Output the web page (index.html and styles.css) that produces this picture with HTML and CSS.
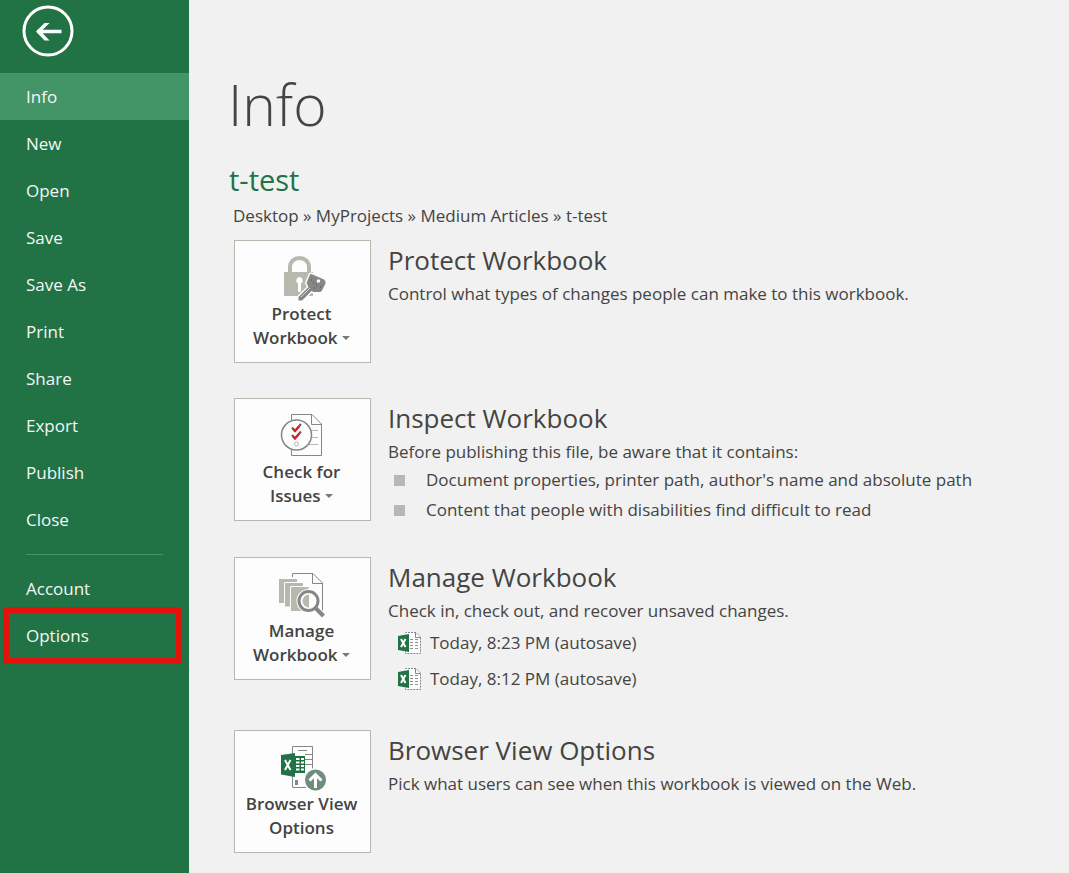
FILE: index.html
```html
<!DOCTYPE html>
<html lang="en">
<head>
<meta charset="utf-8">
<meta name="viewport" content="width=device-width, initial-scale=1">
<title>Info</title>
<link rel="stylesheet" href="styles.css">
</head>
<body>
<div class="backstage">
  <aside class="sidebar">
    <button class="back" type="button" aria-label="Back">
      <svg width="52" height="52" viewBox="0 0 52 52" fill="none" stroke="#fff">
        <circle cx="26" cy="26" r="24" stroke-width="3"/>
        <path d="M15 26.500H39.500" stroke-width="3.500"/>
        <path d="M14 26.500L22.500 18H27.500L19 26.500L27.500 35.500H22.500Z" fill="#fff" stroke="none"/>
      </svg>
    </button>
    <nav class="menu">
      <a class="item current" href="#" aria-current="page">Info</a>
      <a class="item" href="#">New</a>
      <a class="item" href="#">Open</a>
      <a class="item" href="#">Save</a>
      <a class="item" href="#">Save As</a>
      <a class="item" href="#">Print</a>
      <a class="item" href="#">Share</a>
      <a class="item" href="#">Export</a>
      <a class="item" href="#">Publish</a>
      <a class="item" href="#">Close</a>
      <hr class="divider">
      <a class="item" href="#">Account</a>
      <a class="item marked" href="#">Options</a>
    </nav>
  </aside>

  <main class="content">
    <h1 class="title">Info</h1>
    <h2 class="file-name">t-test</h2>
    <p class="path">Desktop » MyProjects » Medium Articles » t-test</p>

    <section class="task">
      <button class="tile" type="button">
        <svg class="tile-icon" width="48" height="48" viewBox="0 0 48 48">
          <path d="M12 21V14.500A9.500 8.500 0 0 1 31 14.500V21" fill="none" stroke="#b7b9ae" stroke-width="4"/>
          <path d="M6 20H35V44H6Z" fill="#b7b9ae"/>
          <path d="M21.500 25a3.500 3.500 0 0 1 1.500 6.500V40h-3v-8.500a3.500 3.500 0 0 1 1.500-6.500Z" fill="#fff"/>
          <path d="M32 22.500Q33 21.500 34.500 22.500L46 27.500Q48 29 47.500 31.500L44 38.500Q43 40.500 40.500 40H35.500L33.500 39L24 48.500H20.500V45L30.500 35L28.500 31Z" fill="#858786" stroke="#fdfdfd" stroke-width="3" stroke-linejoin="round"/>
          <path d="M32 22.500Q33 21.500 34.500 22.500L46 27.500Q48 29 47.500 31.500L44 38.500Q43 40.500 40.500 40H35.500L33.500 39L24 48.500H20.500V45L30.500 35L28.500 31Z" fill="#858786"/>
          <circle cx="40.500" cy="29" r="1.800" fill="#fff"/>
          <path d="M23 45L32 36" stroke="#d8d9d6"/>
          <path d="M33 28h1M38 33h1M35 31h1M42 35h1M36 36h1" stroke="#4c4e4d"/>
        </svg>
        <span>Protect</span>
        <span>Workbook <i class="caret"></i></span>
      </button>
      <div class="details">
        <h3 class="heading">Protect Workbook</h3>
        <p class="text">Control what types of changes people can make to this workbook.</p>
      </div>
    </section>

    <section class="task">
      <button class="tile" type="button">
        <svg class="tile-icon" width="48" height="48" viewBox="0 0 48 48" fill="none">
          <path d="M13.500 4.500H34L43.500 14V45.500H13.500Z" fill="#fdfdfd" stroke="#858786"/>
          <path d="M33.500 4.500V14.500H43.500" stroke="#858786"/>
          <path d="M31 20.500H40M33 27.500H40M31 34.500H40" stroke="#b7b9ae"/>
          <circle cx="18.500" cy="25" r="15" fill="#fdfdfd" stroke="#858786" stroke-width="1.500"/>
          <path d="M14 17.500L17 21L23 14M14 25L17 28.500L23 21.500" stroke="#6e5553" stroke-width="2"/>
          <path d="M15 19L17 21L21 16.500M15 26.500L17 28.500L21 24" stroke="#ee1717" stroke-width="2"/>
          <circle cx="18.500" cy="34" r="2" stroke="#b7b9ae"/>
        </svg>
        <span>Check for</span>
        <span>Issues <i class="caret"></i></span>
      </button>
      <div class="details">
        <h3 class="heading">Inspect Workbook</h3>
        <p class="text">Before publishing this file, be aware that it contains:</p>
        <ul class="findings">
          <li>Document properties, printer path, author's name and absolute path</li>
          <li>Content that people with disabilities find difficult to read</li>
        </ul>
      </div>
    </section>

    <section class="task">
      <button class="tile" type="button">
        <svg class="tile-icon" width="48" height="48" viewBox="0 0 48 48" fill="none">
          <path d="M14.500 8V4.500H35L44.500 14V45" stroke="#858786"/>
          <path d="M34.500 4.500V14.500H44.500" stroke="#858786"/>
          <path d="M1 10H19V34H1Z" fill="#b7b9ae"/>
          <path d="M6.500 13.500H25.500V38H6.500Z" fill="#b7b9ae" stroke="#fdfdfd"/>
          <path d="M12.500 17.500H31V42.500H12.500Z" fill="#b7b9ae" stroke="#fdfdfd"/>
          <circle cx="30.500" cy="32" r="12" fill="#fdfdfd"/>
          <path d="M31 25.500V38.500A6.500 6.500 0 0 1 31 25.500Z" fill="#b7b9ae"/>
          <path d="M36 37L46 47" stroke="#fdfdfd" stroke-width="6"/>
          <circle cx="30.500" cy="32" r="9.500" stroke="#858786" stroke-width="3"/>
          <path d="M37 38.500L45.500 47" stroke="#858786" stroke-width="4"/>
        </svg>
        <span>Manage</span>
        <span>Workbook <i class="caret"></i></span>
      </button>
      <div class="details">
        <h3 class="heading">Manage Workbook</h3>
        <p class="text">Check in, check out, and recover unsaved changes.</p>
        <ul class="versions">
          <li><a class="version" href="#">
            <svg width="24" height="24" viewBox="0 0 24 24" fill="none">
              <path d="M7.500 2V1.500H18L22.500 6V22.500H7.500V20" fill="#fdfdfd" stroke="#858786" stroke-dasharray="2 1"/>
              <path d="M17.500 1.500V6.500H22.500" stroke="#858786"/>
              <path d="M12 8.500H15M17 8.500H20M12 11.500H15M17 11.500H20M12 14.500H15M17 14.500H20M12 17.500H15M17 17.500H20" stroke="#8f918e"/>
              <path d="M0 5L11 3V21L0 19Z" fill="#217346"/>
              <path d="M3 8L7.500 16M7.500 8L3 16" stroke="#fff" stroke-width="2"/>
            </svg>Today, 8:23 PM (autosave)</a></li>
          <li><a class="version" href="#">
            <svg width="24" height="24" viewBox="0 0 24 24" fill="none">
              <path d="M7.500 2V1.500H18L22.500 6V22.500H7.500V20" fill="#fdfdfd" stroke="#858786" stroke-dasharray="2 1"/>
              <path d="M17.500 1.500V6.500H22.500" stroke="#858786"/>
              <path d="M12 8.500H15M17 8.500H20M12 11.500H15M17 11.500H20M12 14.500H15M17 14.500H20M12 17.500H15M17 17.500H20" stroke="#8f918e"/>
              <path d="M0 5L11 3V21L0 19Z" fill="#217346"/>
              <path d="M3 8L7.500 16M7.500 8L3 16" stroke="#fff" stroke-width="2"/>
            </svg>Today, 8:12 PM (autosave)</a></li>
        </ul>
      </div>
    </section>

    <section class="task">
      <button class="tile" type="button">
        <svg class="tile-icon" width="48" height="48" viewBox="0 0 48 48" fill="none">
          <path d="M14.500 4.500H34.500V45.500H14.500Z" fill="#fdfdfd" stroke="#858786"/>
          <path d="M20 8.500H29M27 12.500H34M27 17.500H34M27 22.500H34" stroke="#858786"/>
          <path d="M17 38H20V43H17Z" fill="#858786"/>
          <path d="M16 14H27V31H16Z" fill="#217346"/>
          <path d="M18 17H21.500M23 17H26M18 20.500H21.500M23 20.500H26M18 24H21.500M23 24H26M18 27.500H21.500M23 27.500H26" stroke="#fff" stroke-width="2"/>
          <path d="M3 13L17 11V35L3 32.500Z" fill="#217346"/>
          <path d="M7 18L12.500 28M12.500 18L7 28" stroke="#fff" stroke-width="2"/>
          <circle cx="37.500" cy="38" r="12" fill="#fdfdfd"/>
          <circle cx="37.500" cy="38" r="10.500" fill="#6f8c7c"/>
          <path d="M37.500 46V33M31.500 38.500L37.500 32.500L43.500 38.500" stroke="#fff" stroke-width="3"/>
        </svg>
        <span>Browser View</span>
        <span>Options</span>
      </button>
      <div class="details">
        <h3 class="heading">Browser View Options</h3>
        <p class="text">Pick what users can see when this workbook is viewed on the Web.</p>
      </div>
    </section>
  </main>
</div>
</body>
</html>
```
FILE: styles.css
```css
* {
  box-sizing: border-box;
}

body {
  margin: 0;
  background: #f1f1f1;
  color: #444442;
  font: 17px/28px "Open Sans", "Noto Sans", sans-serif;
}

h1, h2, h3, p, ul {
  margin: 0;
  padding: 0;
  font-weight: 400;
}

ul {
  list-style: none;
}

.backstage {
  display: flex;
  min-height: 100vh;
}

.sidebar {
  flex: 0 0 189px;
  background: #217346;
}

.back {
  display: block;
  margin: 5px 0 16px 22px;
  padding: 0;
  border: 0;
  background: none;
}

.back svg {
  display: block;
}

.item {
  display: block;
  padding-left: 26px;
  color: #f4f7f5;
  line-height: 47px;
  text-decoration: none;
}

.current {
  background: #439467;
}

.divider {
  height: 1px;
  margin: 11px 26px 10px;
  border: 0;
  background: #439467;
}

.marked {
  margin: -5px 7px 0 3px;
  padding-left: 17px;
  border: 6px solid #e3130c;
  border-radius: 3px;
  line-height: 45px;
}

.content {
  flex: 1;
  padding: 64px 40px 0 45px;
}

.title {
  margin-left: -6px;
  font-size: 57px;
  font-weight: 300;
  line-height: 80px;
}

.file-name {
  margin: 16px 0 0 -5px;
  color: #217346;
  font-size: 29px;
  line-height: 40px;
}

.path {
  margin: 2px 0 10px -1px;
}

.task {
  display: flex;
  align-items: flex-start;
  gap: 17px;
  min-height: 158px;
  padding-bottom: 33px;
}

.task:last-child {
  min-height: 0;
  padding-bottom: 20px;
}

.tile {
  display: flex;
  flex: 0 0 137px;
  flex-direction: column;
  align-items: center;
  min-height: 123px;
  padding: 11px 2px 0 0;
  border: 1px solid #b7b9ae;
  background: #fdfdfd;
  color: #444442;
  font: 600 17px/24px "Open Sans", "Noto Sans", sans-serif;
  white-space: nowrap;
}

.tile-icon {
  margin-bottom: 2px;
  overflow: visible;
}

.caret {
  display: inline-block;
  border: 4px solid transparent;
  border-top-color: #777977;
  border-bottom: 0;
  vertical-align: 4px;
}

.heading {
  font-size: 26px;
  line-height: 40px;
}

.findings {
  display: grid;
  gap: 2px;
}

.findings li {
  display: flex;
  align-items: center;
  gap: 21px;
  padding-left: 6px;
}

.findings li::before {
  flex: 0 0 11px;
  height: 11px;
  background: #b7b9ae;
  content: "";
}

.version {
  display: flex;
  align-items: center;
  gap: 8px;
  padding-left: 10px;
  color: inherit;
  line-height: 36px;
  text-decoration: none;
}
```
